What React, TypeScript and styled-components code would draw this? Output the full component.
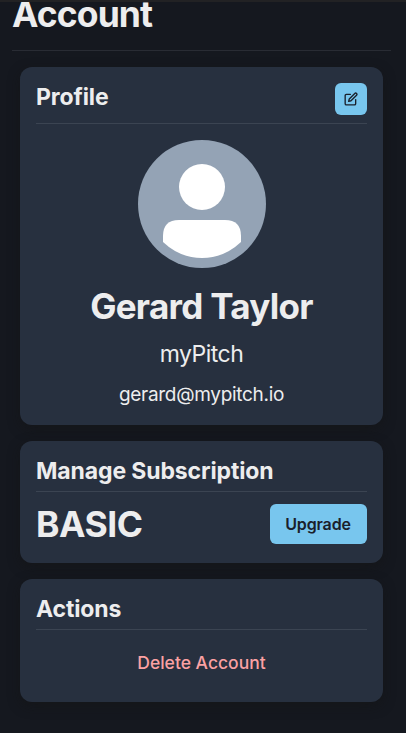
import React from "react";
import styled, { createGlobalStyle } from "styled-components";

const Global = createGlobalStyle`
  *, *::before, *::after { box-sizing: border-box; }
  html, body { margin: 0; background: #15181f; }
  body { font-family: Inter, sans-serif; color: #ededee; -webkit-font-smoothing: antialiased; }
  h1, h2, p { margin: 0; }
  button { font-family: inherit; border: 0; padding: 0; }
`;
const Page = styled.main`
  width: 406px; height: 733px; overflow: hidden; background: #15181f;
  border-top: 2px solid #222224;
`;
const PageHeader = styled.header`
  display: flex; align-items: flex-start;
  margin: 0 15px 0 12px; height: 49px; border-bottom: 1px solid #292c34;
`;
const PageTitle = styled.h1`
  font-size: 35.5px; line-height: 26px; font-weight: 700; letter-spacing: -0.9px;
`;
const Stack = styled.div`
  display: flex; flex-direction: column; gap: 16px; padding: 16px 23px 0 20px;
`;
const Card = styled.section<{ $h: number }>`
  height: ${p => p.$h}px; background: #27303f; border-radius: 12px; padding: 16px;
  box-shadow: 0 4px 12px rgba(20, 20, 20, 0.5);
`;
const CardHeader = styled.div<{ $h: number }>`
  display: flex; justify-content: space-between; align-items: flex-start;
  height: ${p => p.$h}px; border-bottom: 1px solid #3b4452;
`;
const CardTitle = styled.h2`
  font-size: 23px; line-height: 28px; font-weight: 650; letter-spacing: -0.12px; white-space: nowrap;
`;
const IconButton = styled.button`
  display: grid; place-items: center; width: 32px; height: 32px; border-radius: 6px;
  background: #78c6ee; color: #1a202b;
`;
const ProfileBody = styled.div`
  display: flex; flex-direction: column; align-items: center; padding-top: 16px;
`;
const Name = styled.p`
  font-size: 35px; line-height: 44px; font-weight: 700; letter-spacing: -0.7px;
  margin-top: 16px; white-space: nowrap;
`;
const Company = styled.p`font-size: 23px; line-height: 30px; margin-top: 11px; letter-spacing: -0.5px;`;
const Email = styled.p`font-size: 19px; line-height: 24px; margin-top: 14px; letter-spacing: -0.3px;`;
const PlanRow = styled.div`
  display: flex; justify-content: space-between; align-items: center; padding-top: 12px;
`;
const Plan = styled.p`
  font-size: 35.5px; line-height: 38px; padding-top: 2px; font-weight: 700; letter-spacing: -0.5px;
`;
const Upgrade = styled.button`
  width: 97px; height: 40px; border-radius: 6px; background: #78c6ee; color: #1a202b;
  font-size: 16px; font-weight: 600; letter-spacing: -0.15px; padding: 0 1px 1px 0;
`;
const ActionRow = styled.div`display: flex; justify-content: center; padding-top: 20px;`;
const Delete = styled.button`
  background: none; color: #fba1a3; font-size: 17.5px; line-height: 26px; font-weight: 500;
`;

export default function App() {
  return (
    <>
      <Global />
      <Page>
        <PageHeader><PageTitle>Account</PageTitle></PageHeader>
        <Stack>
          <Card $h={358}>
            <CardHeader $h={41}>
              <CardTitle>Profile</CardTitle>
              <IconButton aria-label="Edit profile">
                <svg width="14" height="14" viewBox="0 0 24 24" fill="none" stroke="currentColor" strokeWidth="2.3" strokeLinecap="round" strokeLinejoin="round">
                  <path d="M11 4H4a2 2 0 0 0-2 2v14a2 2 0 0 0 2 2h14a2 2 0 0 0 2-2v-7" />
                  <path d="M18.5 2.5a2.121 2.121 0 0 1 3 3L12 15l-4 1 1-4 9.500-9.500z" />
                </svg>
              </IconButton>
            </CardHeader>
            <ProfileBody>
              <svg width="128" height="128" viewBox="0 0 128 128">
                <circle cx="64" cy="64" r="64" fill="#94a3b5" />
                <circle cx="64" cy="47" r="23" fill="#fff" />
                <path d="M25 102V96Q25 80 41 80H87Q103 80 103 96V102Q86 118 64 118Q42 118 25 102Z" fill="#fff" />
              </svg>
              <Name>Gerard Taylor</Name>
              <Company>myPitch</Company>
              <Email>gerard@mypitch.io</Email>
            </ProfileBody>
          </Card>
          <Card $h={122}>
            <CardHeader $h={35}><CardTitle>Manage Subscription</CardTitle></CardHeader>
            <PlanRow><Plan>BASIC</Plan><Upgrade>Upgrade</Upgrade></PlanRow>
          </Card>
          <Card $h={123}>
            <CardHeader $h={35}><CardTitle>Actions</CardTitle></CardHeader>
            <ActionRow><Delete>Delete Account</Delete></ActionRow>
          </Card>
        </Stack>
      </Page>
    </>
  );
}
